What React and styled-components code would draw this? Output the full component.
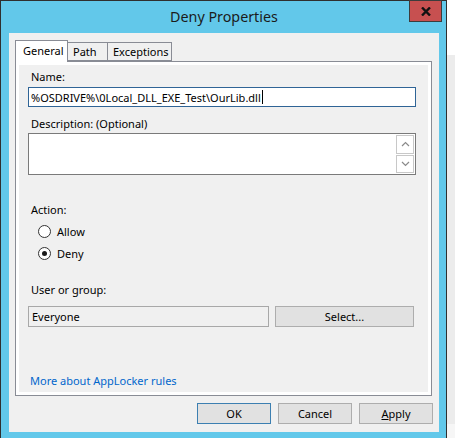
import React from 'react'
import styled, { createGlobalStyle } from 'styled-components'

const GlobalStyle = createGlobalStyle`
  html, body {
    margin: 0;
    padding: 0;
  }
  body {
    width: 455px;
    height: 438px;
    overflow: hidden;
    background: linear-gradient(#ffffff 0, #ffffff 55px, #ececec 55px, #ececec 424px, #f6f6f6 424px);
    font-family: "Segoe UI", "Noto Sans", "Liberation Sans", sans-serif;
    font-size: 11px;
    color: #000;
  }
`

const Window = styled.div`
  box-sizing: border-box;
  width: 447px;
  height: 446px;
  border: 1px solid #2f2f2f;
  background: #62c8ea;
  padding: 0 7px 0 8px;
  display: flex;
  flex-direction: column;
`

const TitleBar = styled.div`
  position: relative;
  height: 32px;
  display: flex;
  align-items: center;
  justify-content: center;
  font-size: 14.3px;
  color: #1b1b1b;
  padding-bottom: 1px;
  box-sizing: border-box;
`

const CloseButton = styled.div`
  position: absolute;
  top: -1px;
  right: -3px;
  width: 33px;
  height: 22px;
  box-sizing: border-box;
  border: 1px solid #3c3c3c;
  background: #c75050;
  display: flex;
  align-items: center;
  justify-content: center;
`

const Body = styled.div`
  height: 399px;
  box-sizing: border-box;
  background: #f0f0f0;
  padding: 7px 6px 0 6px;
  display: flex;
  flex-direction: column;
`

const TabStrip = styled.div`
  display: flex;
  align-items: flex-end;
  height: 21px;
  position: relative;
  z-index: 1;
`

const Tab = styled.div`
  box-sizing: border-box;
  width: ${({ w }) => w}px;
  height: ${({ active }) => (active ? 22 : 19)}px;
  margin-bottom: ${({ active }) => (active ? -1 : 0)}px;
  margin-left: ${({ first }) => (first ? 0 : -1)}px;
  border: 1px solid #898c95;
  border-bottom: ${({ active }) => (active ? 'none' : '1px solid #898c95')};
  background: ${({ active }) => (active ? '#ffffff' : '#f0f0f0')};
  padding-left: ${({ active }) => (active ? 7 : 5)}px;
  padding-bottom: ${({ active }) => (active ? 2 : 0)}px;
  display: flex;
  align-items: center;
  line-height: 15px;
`

const Panel = styled.div`
  box-sizing: border-box;
  height: 335px;
  margin-right: 1px;
  border: 1px solid #898c95;
  background: #ffffff;
  padding: 3px;
`

const Page = styled.div`
  height: 100%;
  box-sizing: border-box;
  background: #f0f0f0;
  padding: 4px 12px 0 9px;
  display: flex;
  flex-direction: column;
`

const Label = styled.div`
  line-height: 15px;
  margin-left: 3px;
  margin-top: ${({ top }) => top || 0}px;
`

const TextBox = styled.div`
  box-sizing: border-box;
  height: ${({ h }) => h}px;
  margin-top: ${({ top }) => top || 0}px;
  border: 1px solid ${({ focused }) => (focused ? '#2f6496' : '#7a7a7a')};
  background: #ffffff;
  padding: 0 2px;
  display: flex;
  align-items: ${({ multi }) => (multi ? 'stretch' : 'center')};
  justify-content: ${({ multi }) => (multi ? 'flex-end' : 'flex-start')};
  white-space: nowrap;
`

const Caret = styled.span`
  display: inline-block;
  width: 1px;
  height: 14px;
  background: #000;
  vertical-align: middle;
  margin-left: 1px;
`

const ScrollBar = styled.div`
  width: 18px;
  margin: 1px -1px 1px 0;
  display: flex;
  flex-direction: column;
  gap: 1px;
`

const ScrollButton = styled.div`
  flex: 1;
  box-sizing: border-box;
  border: 1px solid #c8c8c8;
  background: #ffffff;
  display: flex;
  align-items: center;
  justify-content: center;
`

const RadioRow = styled.div`
  height: 22px;
  display: flex;
  align-items: center;
  margin-left: 10px;
  margin-top: ${({ top }) => top || 0}px;
`

const RadioDot = styled.span`
  box-sizing: border-box;
  width: 13px;
  height: 13px;
  border-radius: 50%;
  border: 1px solid #333;
  background: #fff;
  margin-right: 6px;
  display: flex;
  align-items: center;
  justify-content: center;
  &::after {
    content: '';
    width: 5px;
    height: 5px;
    border-radius: 50%;
    background: ${({ checked }) => (checked ? '#1a1a1a' : 'transparent')};
  }
`

const PickRow = styled.div`
  display: flex;
  gap: 6px;
  margin-top: 9px;
  padding-right: 2px;
`

const ReadOnlyBox = styled.div`
  box-sizing: border-box;
  width: 241px;
  height: 21px;
  border: 1px solid #a8a8a8;
  background: #f0f0f0;
  padding-left: 3px;
  display: flex;
  align-items: center;
`

const Button = styled.div`
  box-sizing: border-box;
  width: ${({ w }) => w || 74}px;
  height: 21px;
  border: 1px solid ${({ primary }) => (primary ? '#3c7fb1' : '#adadad')};
  background: #e1e1e1;
  display: flex;
  align-items: center;
  justify-content: center;
`

const HelpLink = styled.div`
  margin-top: auto;
  margin-bottom: 4px;
  margin-left: 2px;
  line-height: 15px;
  color: #0066cc;
`

const ButtonRow = styled.div`
  display: flex;
  justify-content: flex-end;
  gap: 7px;
  margin-top: 7px;
`

const AccessKey = styled.span`
  text-decoration: underline;
`

const Chevron = ({ up }) => (
  <svg width="9" height="6" viewBox="0 0 9 6">
    <path
      d={up ? 'M1 5 L4.5 1.5 L8 5' : 'M1 1 L4.5 4.5 L8 1'}
      fill="none"
      stroke="#8a8a8a"
      strokeWidth="1.2"
    />
  </svg>
)

export default function App() {
  return (
    <>
      <GlobalStyle />
      <Window>
        <TitleBar>
          Deny Properties
          <CloseButton>
            <svg width="10" height="9" viewBox="0 0 10 9">
              <path d="M1 0.5 L9 8.5 M9 0.5 L1 8.5" stroke="#111" strokeWidth="2.4" />
            </svg>
          </CloseButton>
        </TitleBar>
        <Body>
          <TabStrip>
            <Tab w={53} active first>General</Tab>
            <Tab w={41}>Path</Tab>
            <Tab w={65}>Exceptions</Tab>
          </TabStrip>
          <Panel>
            <Page>
              <Label>Name:</Label>
              <TextBox h={20} top={3} focused>
                %OSDRIVE%\0Local_DLL_EXE_Test\OurLib.dll<Caret />
              </TextBox>
              <Label top={9}>Description: (Optional)</Label>
              <TextBox h={42} top={2} multi>
                <ScrollBar>
                  <ScrollButton><Chevron up /></ScrollButton>
                  <ScrollButton><Chevron /></ScrollButton>
                </ScrollBar>
              </TextBox>
              <Label top={27}>Action:</Label>
              <RadioRow top={3}>
                <RadioDot />
                Allow
              </RadioRow>
              <RadioRow>
                <RadioDot checked />
                Deny
              </RadioRow>
              <Label top={18}>User or group:</Label>
              <PickRow>
                <ReadOnlyBox>Everyone</ReadOnlyBox>
                <Button w={139}>Select...</Button>
              </PickRow>
              <HelpLink>More about AppLocker rules</HelpLink>
            </Page>
          </Panel>
          <ButtonRow>
            <Button primary>OK</Button>
            <Button>Cancel</Button>
            <Button><AccessKey>A</AccessKey>pply</Button>
          </ButtonRow>
        </Body>
      </Window>
    </>
  )
}
